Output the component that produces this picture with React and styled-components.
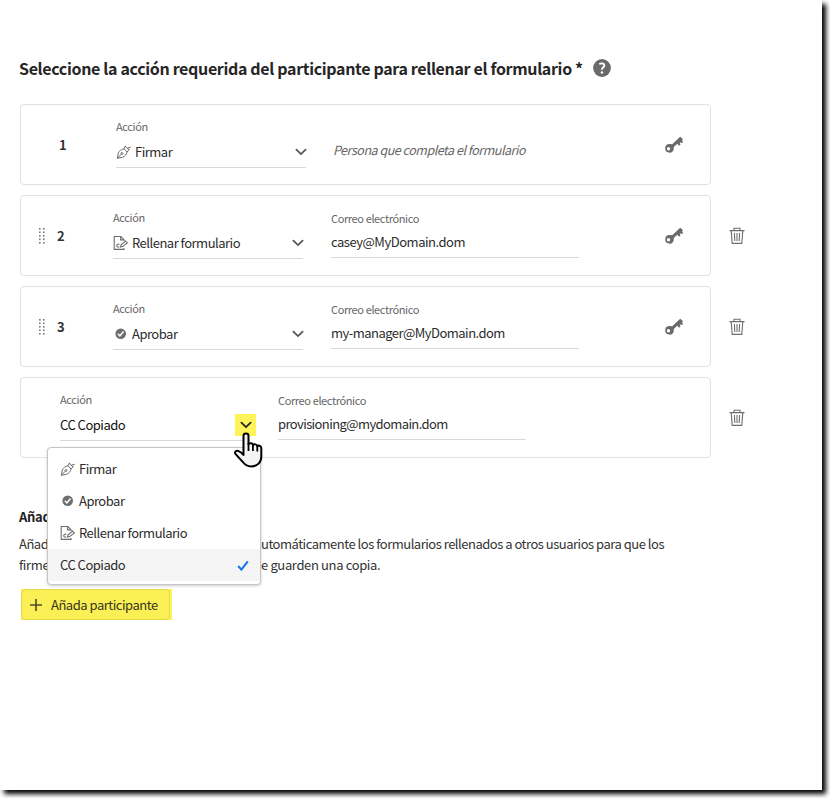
import React from 'react';
import styled, { createGlobalStyle } from 'styled-components';

const PARTICIPANTS = [
  { order: 1, action: 'sign', note: 'Persona que completa el formulario' },
  { order: 2, action: 'fill', email: 'casey@MyDomain.dom', spacing: -0.48 },
  { order: 3, action: 'approve', email: 'my-manager@MyDomain.dom', spacing: -0.53 },
];

const ACTIONS = {
  sign: 'Firmar',
  approve: 'Aprobar',
  fill: 'Rellenar formulario',
  copy: 'CC Copiado',
};

const PenIcon = () => (
  <svg width="16" height="16" viewBox="0 0 16 16" fill="none" stroke="#6e6e6e" strokeWidth="1">
    <path d="M1.300 14.300 2.300 8.900c1-2.200 3.300-3.700 5.700-4.100l3.100 3.300c-.8 2.500-2.200 4.600-4.600 5.200z" />
    <path d="m8 4.800 1.400-3 .7 1.500 1.600 1.600 1.600.4-2.200 2.800" />
    <path d="m11 4.300 3.800-1.100M1.300 14.300l3.800-4" />
    <circle cx="5.900" cy="9.500" r="1" />
  </svg>
);

const FillIcon = () => (
  <svg width="16" height="16" viewBox="0 0 16 16" fill="none" stroke="#6e6e6e" strokeWidth="1.1">
    <path d="M11 13v1.400H1.200V1.500h6.600l3.200 3.200V6" />
    <path d="M7.600 1.600v3.300H11" />
    <path d="M6.400 9.300c-1.600-.5-2.700.3-2.700 1.400 0 1.200 1 1.600 2.400 1.200M7.400 12.100l.7-2.300 4.500-3.700 1.700 1.800-4.600 3.700z" />
  </svg>
);

const ApproveIcon = () => (
  <svg width="16" height="16" viewBox="0 0 16 16">
    <circle cx="7.700" cy="7.700" r="5.300" fill="#6e6e6e" />
    <path d="m4.900 7.800 2 2.100 3.600-4.400" fill="none" stroke="#fff" strokeWidth="1.500" />
  </svg>
);

const ICONS = { sign: PenIcon, approve: ApproveIcon, fill: FillIcon };

const Chevron = ({ color = '#555' }) => (
  <svg width="12" height="8" viewBox="0 0 12 8" fill="none" stroke={color} strokeWidth="1.800">
    <path d="m1.400 1.700 4.600 4.400 4.600-4.400" strokeLinecap="round" />
  </svg>
);

const KeyIcon = () => (
  <svg width="20" height="18" viewBox="0 0 20 18">
    <path
      d="M5.500 8a4.300 4.300 0 1 0 4.200 5.200l.1-2.300 3.500-3.100 1.700 2 1.600-1.300-.9-1.300 1.100-.9 1.200 1 1-1.200-.9-1.800.8-1.300-2.700-2.200-8 7.500zM4.500 11a1.700 1.700 0 1 1 0 3.400 1.700 1.700 0 0 1 0-3.400z"
      fill="#6a6a6a"
      fillRule="evenodd"
    />
  </svg>
);

const TrashIcon = () => (
  <svg width="16" height="18" viewBox="0 0 16 18" fill="none" stroke="#6e6e6e" strokeWidth="1.100">
    <path d="M.5 3.600h15M5 3.500V1.300h6v2.200M2.200 3.600l1 12.800h9.600l1-12.800M5.400 6l.4 8M8 6v8M10.600 6l-.4 8" />
  </svg>
);

const DragHandle = () => (
  <svg width="6" height="16" viewBox="0 0 6 16" fill="#777">
    {[0, 3.5, 7, 10.5, 14].map((y) => (
      <React.Fragment key={y}>
        <rect x="0" y={y} width="1.600" height="1.600" />
        <rect x="4" y={y} width="1.600" height="1.600" />
      </React.Fragment>
    ))}
  </svg>
);

const HelpIcon = () => (
  <svg width="18" height="18" viewBox="0 0 18 18">
    <circle cx="9" cy="9" r="8.900" fill="#6a6a6a" />
    <path
      d="M6.300 5.200c1.700-1.300 5.100-1 5.100 1.200 0 1.800-2.500 2-2.500 4.300"
      fill="none"
      stroke="#fff"
      strokeWidth="1.900"
    />
    <circle cx="8.900" cy="13.500" r="1.250" fill="#fff" />
  </svg>
);

const HandCursor = () => (
  <svg width="30" height="36" viewBox="0 0 30 36">
    <path
      d="M10.500 21V3.800c0-3.200 5-3.200 5 0v8.500c.3-1.600 4.300-1.300 4.400.8.700-1.300 4.300-1 4.400 1.200.8-1.200 4-.7 4 1.800v8.400c0 5.800-3.900 9.900-9.900 9.900-5 0-7-1.900-9.200-5.100L2.400 21.800c-1-1.700.6-3.600 2.700-2.900 2 .7 3.700 1.700 5.400 4z"
      fill="#f4f4f4"
      stroke="#000"
      strokeWidth="2"
      strokeLinejoin="round"
    />
    <path d="M15.500 11v8M19.900 12.500V19M24.300 14v5.500" stroke="#000" strokeWidth="1.800" />
  </svg>
);

const ActionField = ({ action, open }) => {
  const Icon = ICONS[action];
  return (
    <Field $width={190} $top={13}>
      <FieldLabel>Acción</FieldLabel>
      <FieldValue $height={34} $drop={2}>
        {Icon && (
          <IconSlot>
            <Icon />
          </IconSlot>
        )}
        <ValueText $dark={open}>{ACTIONS[action]}</ValueText>
        <ChevronBox $active={open}>
          <Chevron color={open ? '#222' : '#555'} />
        </ChevronBox>
      </FieldValue>
      {open && (
        <>
          <ActionMenu selected={action} />
          <CursorLayer>
            <HandCursor />
          </CursorLayer>
        </>
      )}
    </Field>
  );
};

const ActionMenu = ({ selected }) => (
  <Menu>
    {['sign', 'approve', 'fill', 'copy'].map((key) => {
      const Icon = ICONS[key];
      return (
        <MenuItem key={key} $selected={key === selected}>
          {Icon && (
            <IconSlot>
              <Icon />
            </IconSlot>
          )}
          <ValueText>{ACTIONS[key]}</ValueText>
          {key === selected && (
            <CheckMark width="12" height="11" viewBox="0 0 12 11">
              <path d="m1.200 6 3.200 3.600L10.800 1.300" fill="none" stroke="#1473e6" strokeWidth="2" />
            </CheckMark>
          )}
        </MenuItem>
      );
    })}
  </Menu>
);

const EmailField = ({ value, spacing }) => (
  <Field $width={248} $top={14}>
    <FieldLabel>Correo electrónico</FieldLabel>
    <FieldValue $height={32}>
      <ValueText $spacing={spacing}>{value}</ValueText>
    </FieldValue>
  </Field>
);

const App = () => (
  <>
    <GlobalStyle />
    <Screen>
      <Page>
        <Header>
          <Title>Seleccione la acción requerida del participante para rellenar el formulario *</Title>
          <HelpIcon />
        </Header>
        <List>
          {PARTICIPANTS.map(({ order, action, email, note, spacing }) => (
            <Row key={order}>
              <Card>
                <Lead $width={order === 1 ? 95 : 92} $indent={order === 1 ? 38 : 18}>
                  {order > 1 && <DragHandle />}
                  <Order>{order}</Order>
                </Lead>
                <ActionField action={action} />
                {note ? <Note>{note}</Note> : <EmailField value={email} spacing={spacing} />}
                <KeySlot>
                  <KeyIcon />
                </KeySlot>
              </Card>
              {order > 1 && <TrashIcon />}
            </Row>
          ))}
          <Row>
            <Card>
              <Lead $width={39} />
              <ActionField action="copy" open />
              <EmailField value="provisioning@mydomain.dom" spacing={-0.6} />
            </Card>
            <TrashIcon />
          </Row>
        </List>
        <Section>
          <SectionTitle>Añad</SectionTitle>
          <Paragraph>
            <Opening>Añad</Opening>
            utomáticamente los formularios rellenados a otros usuarios para que los
          </Paragraph>
          <Paragraph $spacing={-0.36}>
            <Opening>firme</Opening>e guarden una copia.
          </Paragraph>
          <Highlight>
            <AddButton>
              <svg width="12" height="12" viewBox="0 0 12 12" stroke="#4b4a2a" strokeWidth="1.600">
                <path d="M6 0v12M0 6h12" />
              </svg>
              Añada participante
            </AddButton>
          </Highlight>
        </Section>
      </Page>
    </Screen>
  </>
);

const GlobalStyle = createGlobalStyle`
  * {
    box-sizing: border-box;
  }
  body {
    margin: 0;
    background-color: #fff;
    font-family: 'Noto Sans CJK SC', sans-serif;
  }
  svg {
    display: block;
    flex-shrink: 0;
  }
`;

const Screen = styled.div`
  width: 830px;
  height: 798px;
  overflow: hidden;
`;

const Page = styled.main`
  width: 822px;
  height: 790px;
  padding: 55px 0 0 20px;
  background-color: #fff;
  box-shadow: 4px 4px 5px #000;
`;

const Header = styled.header`
  display: flex;
  align-items: center;
  gap: 10px;
  height: 25px;
  margin-left: -1px;
`;

const Title = styled.h1`
  margin: 0;
  color: #262626;
  font-size: 16px;
  font-weight: 700;
  letter-spacing: -0.34px;
  line-height: 24px;
  white-space: nowrap;
`;

const List = styled.div`
  display: flex;
  flex-direction: column;
  gap: 10px;
  margin-top: 24px;
`;

const Row = styled.div`
  display: flex;
  align-items: center;
  gap: 18px;
`;

const Card = styled.div`
  display: flex;
  width: 691px;
  height: 81px;
  border: 1px solid #e1e1e1;
  border-radius: 4px;
`;

const Lead = styled.div`
  display: flex;
  align-items: center;
  gap: 12px;
  width: ${({ $width }) => $width}px;
  padding-left: ${({ $indent }) => $indent || 0}px;
`;

const Order = styled.span`
  color: #333;
  font-size: 13px;
  font-weight: 700;
  line-height: 16px;
`;

const Field = styled.div`
  position: relative;
  width: ${({ $width }) => $width}px;
  margin-right: 28px;
  padding-top: ${({ $top }) => $top}px;
`;

const FieldLabel = styled.div`
  color: #666;
  font-size: 11px;
  letter-spacing: -0.38px;
  line-height: 16px;
`;

const FieldValue = styled.div`
  display: flex;
  align-items: center;
  height: ${({ $height }) => $height}px;
  padding-top: ${({ $drop }) => $drop || 0}px;
  border-bottom: 1px solid #d9d9d9;
`;

const IconSlot = styled.span`
  width: 16px;
  margin-right: 3px;
`;

const ValueText = styled.span`
  color: ${({ $dark }) => ($dark ? '#111' : '#2c2c2c')};
  font-size: 13px;
  letter-spacing: ${({ $spacing }) => $spacing || -0.5}px;
  line-height: 18px;
  white-space: nowrap;
`;

const ChevronBox = styled.span`
  display: flex;
  align-items: center;
  justify-content: center;
  width: 21px;
  height: 22px;
  margin: 0 ${({ $active }) => ($active ? -6 : -5)}px 0 auto;
  background-color: ${({ $active }) => ($active ? '#fff35a' : 'transparent')};
`;

const Note = styled.p`
  margin: 0 0 0 -1px;
  padding-top: 36px;
  color: #666;
  font-size: 12.5px;
  font-style: italic;
  letter-spacing: -0.47px;
  line-height: 18px;
  white-space: nowrap;
`;

const KeySlot = styled.span`
  margin: 31px 26px 0 auto;
`;

const Menu = styled.div`
  position: absolute;
  top: 69px;
  left: -13px;
  z-index: 10;
  width: 214px;
  height: 138px;
  padding: 5px 0 0;
  border: 1px solid #c6c6c6;
  border-radius: 4px;
  background-color: #fff;
  box-shadow: 0 1px 3px rgba(0, 0, 0, 0.2);
`;

const MenuItem = styled.div`
  display: flex;
  align-items: center;
  height: 32px;
  padding: 0 11px 0 12px;
  background-color: ${({ $selected }) => ($selected ? '#f5f5f5' : 'transparent')};
`;

const CheckMark = styled.svg`
  margin-left: auto;
`;

const CursorLayer = styled.div`
  position: absolute;
  top: 54px;
  left: 173px;
  z-index: 20;
`;

const Section = styled.section`
  margin: 48px 0 0 -1px;
`;

const SectionTitle = styled.h2`
  margin: 0 0 6px;
  color: #222;
  font-size: 13px;
  font-weight: 700;
  letter-spacing: -0.3px;
  line-height: 21px;
`;

const Paragraph = styled.p`
  display: flex;
  margin: 0;
  color: #333;
  font-size: 13px;
  letter-spacing: ${({ $spacing }) => $spacing || -0.49}px;
  line-height: 21px;
  white-space: nowrap;
`;

/* the open menu covers the rest of this stretch of the line */
const Opening = styled.span`
  width: 242px;
`;

const Highlight = styled.div`
  width: 151px;
  height: 31px;
  margin: 14px 0 0 2px;
  background-color: #fff35a;
`;

const AddButton = styled.button`
  display: flex;
  align-items: center;
  gap: 9px;
  width: 149px;
  height: 31px;
  padding: 0 0 0 8px;
  border: 1px solid #e2d94e;
  border-radius: 4px;
  background-color: #faf056;
  color: #38361a;
  font-family: inherit;
  font-size: 13px;
  letter-spacing: -0.48px;
  white-space: nowrap;
`;

export default App;
